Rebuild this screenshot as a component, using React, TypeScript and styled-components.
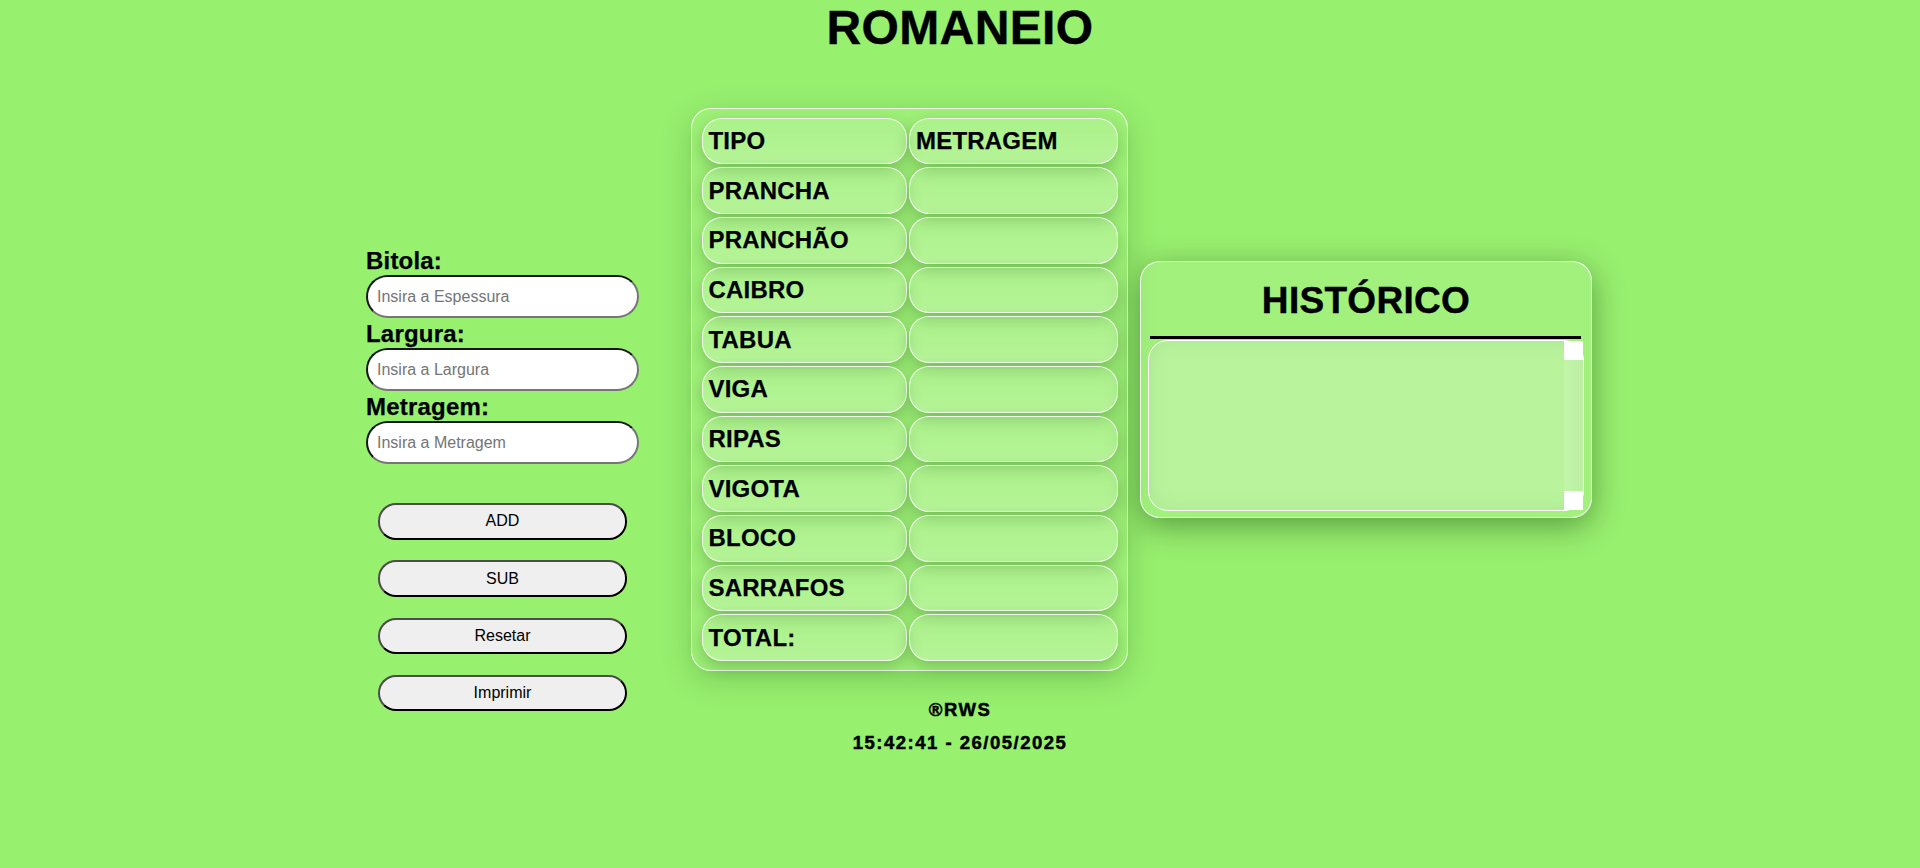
import React from "react";
import styled, { createGlobalStyle } from "styled-components";

const GlobalStyle = createGlobalStyle`
  html, body {
    margin: 0;
    padding: 0;
    background: #98f06f;
    font-family: "Liberation Sans", Arial, sans-serif;
    color: #000;
  }
  * { box-sizing: border-box; }
`;

const Page = styled.div`
  min-height: 100vh;
  background: #98f06f;
`;

const Title = styled.h1`
  margin: 0;
  text-align: center;
  font-size: 48px;
  font-weight: 700;
  line-height: 55px;
  letter-spacing: 0.4px;
  -webkit-text-stroke: 0.4px #000;
`;

const Main = styled.div`
  display: flex;
  justify-content: center;
  align-items: flex-start;
  padding-left: 38px;
`;

const Column = styled.div<{ $top: number; $gapRight: number }>`
  display: flex;
  flex-direction: column;
  margin-top: ${(p) => p.$top}px;
  margin-right: ${(p) => p.$gapRight}px;
`;

const FormColumn = styled(Column)`
  width: 273px;
`;

const Label = styled.label`
  display: block;
  font-size: 24px;
  font-weight: 700;
  line-height: 28px;
  letter-spacing: 0.2px;
  -webkit-text-stroke: 0.25px #000;
`;

const Input = styled.input`
  display: block;
  width: 273px;
  height: 43px;
  margin-bottom: 2px;
  padding: 0 9px;
  border-radius: 22px;
  border-style: solid;
  border-width: 2px;
  border-color: #161616 #767676 #767676 #161616;
  background: #fff;
  font-family: "Liberation Sans", Arial, sans-serif;
  font-size: 16px;
  color: #000;
  outline: none;
  &::placeholder {
    color: #757575;
  }
`;

const ButtonList = styled.div`
  display: flex;
  flex-direction: column;
  align-items: center;
  gap: 20.8px;
  margin-top: 37px;
`;

const Button = styled.button`
  width: 249px;
  height: 36.5px;
  border-radius: 18px;
  border-style: solid;
  border-width: 2px;
  border-color: #4c4c4c #000 #000 #4c4c4c;
  background: #efefef;
  font-family: "Liberation Sans", Arial, sans-serif;
  font-size: 16px;
  color: #000;
  padding: 0;
  cursor: pointer;
`;

const Glass = styled.div`
  background: rgba(255, 255, 255, 0.06);
  border: 1px solid rgba(255, 255, 255, 0.85);
  border-radius: 20px;
`;

const TablePanel = styled(Glass)`
  display: grid;
  grid-template-columns: 205px 209px;
  grid-auto-rows: 46.7px;
  column-gap: 2.5px;
  row-gap: 3px;
  padding: 8.5px 9px 9px 9.5px;
  box-shadow: 0 8px 32px rgba(0, 60, 0, 0.2);
`;

const Cell = styled.div`
  display: flex;
  align-items: center;
  padding-left: 6px;
  border: 1px solid rgba(255, 255, 255, 0.85);
  border-radius: 20px;
  background: linear-gradient(
    to bottom,
    rgba(255, 255, 255, 0.14),
    rgba(255, 255, 255, 0.24)
  );
  box-shadow: 0 6px 16px rgba(0, 50, 0, 0.24);
  font-size: 24px;
  font-weight: 700;
  letter-spacing: 0.2px;
  -webkit-text-stroke: 0.25px #000;
`;

const Footer = styled.div`
  margin-top: 23px;
  padding-left: 101px;
  text-align: center;
  font-size: 18.5px;
  font-weight: 700;
  line-height: 32.7px;
  letter-spacing: 1.5px;
  -webkit-text-stroke: 0.5px #000;
`;

const HistoryPanel = styled(Glass)`
  width: 452px;
  padding: 17.7px 7px 6px;
  background: rgba(255, 255, 255, 0.1);
  box-shadow: 0 8px 32px rgba(0, 40, 0, 0.42);
`;

const HistoryTitle = styled.h2`
  margin: 0 0 13.8px;
  text-align: center;
  font-size: 37px;
  font-weight: 700;
  line-height: 42.5px;
  letter-spacing: 0.3px;
  -webkit-text-stroke: 0.4px #000;
`;

const Rule = styled.hr`
  margin: 0 3px 1px 2px;
  border: none;
  height: 3px;
  background: #000;
`;

const HistoryBox = styled.div`
  position: relative;
  height: 171px;
`;

const HistoryArea = styled.textarea`
  display: block;
  width: 100%;
  height: 100%;
  padding: 2px 22px 2px 4px;
  border: 1px solid #fff;
  border-radius: 20px;
  background: rgba(255, 255, 255, 0.25);
  box-shadow: inset 0 0 22px rgba(0, 60, 0, 0.07);
  resize: none;
  outline: none;
  overflow: hidden;
  font-family: "Liberation Sans", Arial, sans-serif;
  font-size: 16px;
`;

const ScrollTrack = styled.div`
  position: absolute;
  top: 1px;
  bottom: 1px;
  right: 1px;
  width: 19px;
  display: flex;
  flex-direction: column;
  justify-content: space-between;
  background: rgba(255, 255, 255, 0.12);
  pointer-events: none;
`;

const ScrollButton = styled.div`
  width: 19px;
  height: 19px;
  background: #fff;
`;

const types = [
  "PRANCHA",
  "PRANCHÃO",
  "CAIBRO",
  "TABUA",
  "VIGA",
  "RIPAS",
  "VIGOTA",
  "BLOCO",
  "SARRAFOS",
  "TOTAL:",
];

export default function App() {
  return (
    <Page>
      <GlobalStyle />
      <Title>ROMANEIO</Title>
      <Main>
        <FormColumn $top={192} $gapRight={52}>
          <Label>Bitola:</Label>
          <Input placeholder="Insira a Espessura" />
          <Label>Largura:</Label>
          <Input placeholder="Insira a Largura" />
          <Label>Metragem:</Label>
          <Input placeholder="Insira a Metragem" />
          <ButtonList>
            <Button>ADD</Button>
            <Button>SUB</Button>
            <Button>Resetar</Button>
            <Button>Imprimir</Button>
          </ButtonList>
        </FormColumn>
        <Column $top={53} $gapRight={12}>
          <TablePanel>
            <Cell>TIPO</Cell>
            <Cell>METRAGEM</Cell>
            {types.map((t) => (
              <React.Fragment key={t}>
                <Cell>{t}</Cell>
                <Cell />
              </React.Fragment>
            ))}
          </TablePanel>
          <Footer>
            <div>®RWS</div>
            <div>15:42:41 - 26/05/2025</div>
          </Footer>
        </Column>
        <Column $top={206} $gapRight={0}>
          <HistoryPanel>
            <HistoryTitle>HISTÓRICO</HistoryTitle>
            <Rule />
            <HistoryBox>
              <HistoryArea />
              <ScrollTrack>
                <ScrollButton />
                <ScrollButton />
              </ScrollTrack>
            </HistoryBox>
          </HistoryPanel>
        </Column>
      </Main>
    </Page>
  );
}
